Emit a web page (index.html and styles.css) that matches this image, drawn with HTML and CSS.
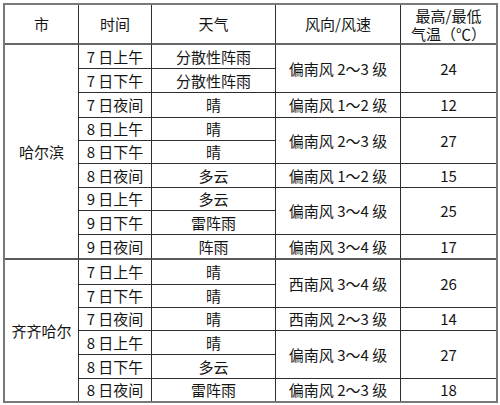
FILE: index.html
```html
<!DOCTYPE html>
<html lang="zh">
<head>
<meta charset="utf-8">
<link rel="stylesheet" href="styles.css">
</head>
<body>
<div class="table">
  <div class="c h">市</div>
  <div class="c h">时间</div>
  <div class="c h">天气</div>
  <div class="c h">风向/风速</div>
  <div class="c h last two">最高/最低<br>气温（℃）</div>

  <div class="c city sep" style="grid-row: span 9">哈尔滨</div>
  <div class="c">7 日上午</div><div class="c">分散性阵雨</div>
  <div class="c" style="grid-row: span 2">偏南风 2～3 级</div><div class="c last" style="grid-row: span 2">24</div>
  <div class="c">7 日下午</div><div class="c">分散性阵雨</div>
  <div class="c">7 日夜间</div><div class="c">晴</div><div class="c">偏南风 1～2 级</div><div class="c last">12</div>
  <div class="c">8 日上午</div><div class="c">晴</div>
  <div class="c" style="grid-row: span 2">偏南风 2～3 级</div><div class="c last" style="grid-row: span 2">27</div>
  <div class="c">8 日下午</div><div class="c">晴</div>
  <div class="c">8 日夜间</div><div class="c">多云</div><div class="c">偏南风 1～2 级</div><div class="c last">15</div>
  <div class="c">9 日上午</div><div class="c">多云</div>
  <div class="c" style="grid-row: span 2">偏南风 3～4 级</div><div class="c last" style="grid-row: span 2">25</div>
  <div class="c">9 日下午</div><div class="c">雷阵雨</div>
  <div class="c sep">9 日夜间</div><div class="c sep">阵雨</div><div class="c sep">偏南风 3～4 级</div><div class="c last sep">17</div>

  <div class="c city bottom" style="grid-row: span 6">齐齐哈尔</div>
  <div class="c">7 日上午</div><div class="c">晴</div>
  <div class="c" style="grid-row: span 2">西南风 3～4 级</div><div class="c last" style="grid-row: span 2">26</div>
  <div class="c">7 日下午</div><div class="c">晴</div>
  <div class="c">7 日夜间</div><div class="c">晴</div><div class="c">西南风 2～3 级</div><div class="c last">14</div>
  <div class="c">8 日上午</div><div class="c">晴</div>
  <div class="c" style="grid-row: span 2">偏南风 3～4 级</div><div class="c last" style="grid-row: span 2">27</div>
  <div class="c">8 日下午</div><div class="c">多云</div>
  <div class="c bottom">8 日夜间</div><div class="c bottom">雷阵雨</div><div class="c bottom">偏南风 2～3 级</div><div class="c last bottom">18</div>
</div>
</body>
</html>
```
FILE: styles.css
```css
html, body {
  margin: 0;
  padding: 0;
  background: #ffffff;
}
body {
  padding: 3px 0 0 3px;
  font-family: "Noto Sans CJK SC", "Noto Sans", sans-serif;
  font-size: 15px;
  color: #151515;
}
.table {
  box-sizing: border-box;
  width: 495px;
  display: grid;
  grid-template-columns: 74px 73px 124px 125px 95px;
  grid-template-rows: 40px 24px 24px 25px 23px 23px 24px 23px 24px 25px 25px 23px 23px 24px 24px 22px;
  border: 2px solid #787878;
}
.c {
  box-sizing: border-box;
  display: flex;
  align-items: center;
  justify-content: center;
  text-align: center;
  border-right: 1px solid #2e2e2e;
  border-bottom: 1px solid #2e2e2e;
  white-space: nowrap;
  line-height: 18px;
}
.h {
  border-bottom: 2px solid #666666;
}
.two {
  line-height: 18px;
  padding-top: 1px;
}
.last {
  border-right: none;
}
.sep {
  border-bottom: 2px solid #5a5a5a;
}
.bottom {
  border-bottom: none;
}
```
